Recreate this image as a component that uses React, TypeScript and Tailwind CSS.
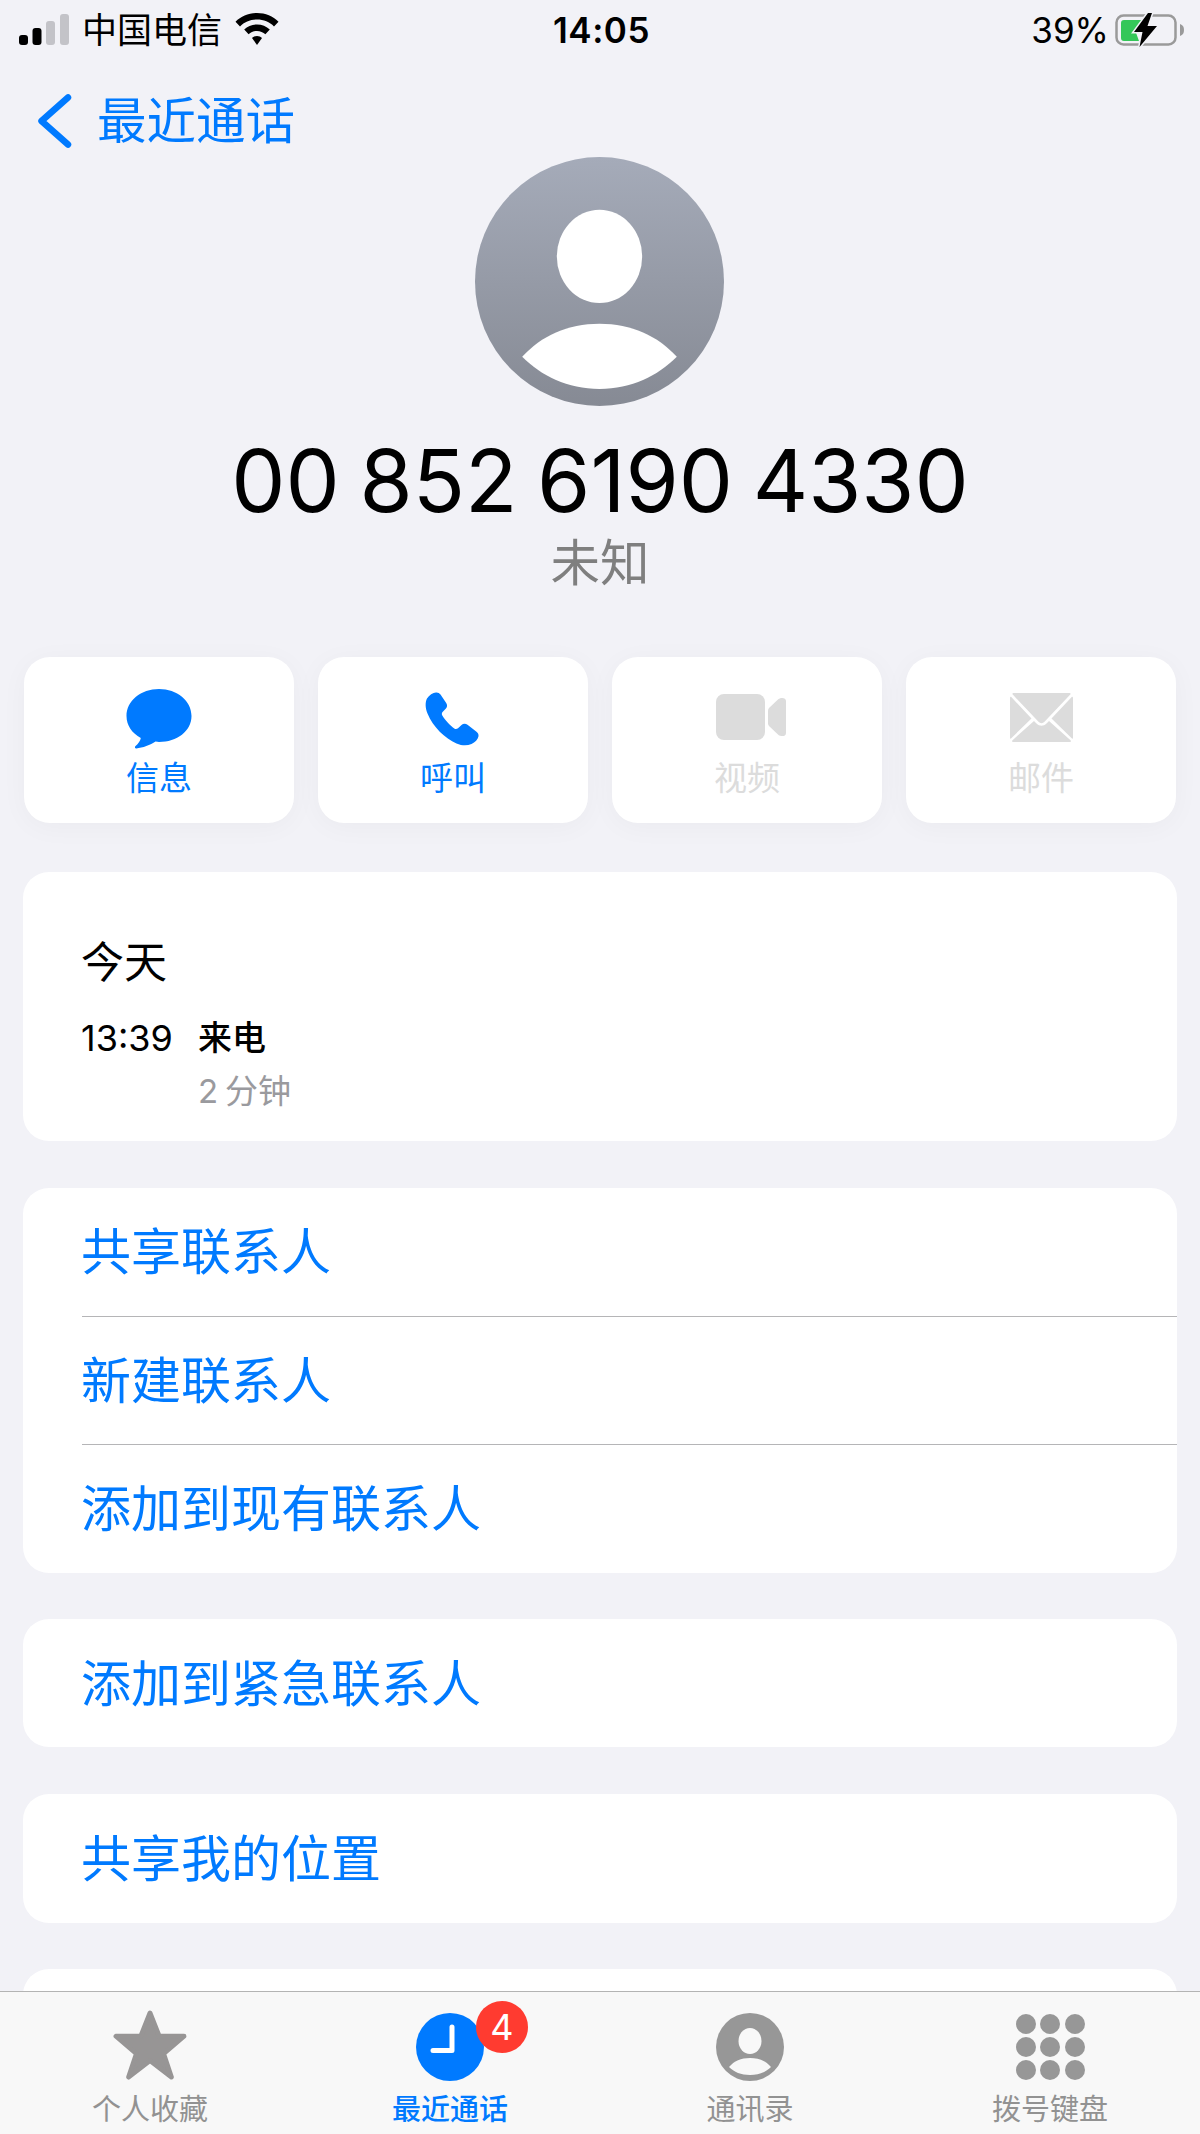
import React from "react";

const Blue = "#007aff";

function ActionButton({ label, disabled, children }: { label: string; disabled?: boolean; children: React.ReactNode }) {
  return (
    <div className="h-[166px] rounded-[26px] bg-white shadow-[0_4px_28px_rgba(0,0,0,0.035)] flex flex-col items-center">
      <div className="h-[92px] w-full flex items-end justify-center">{children}</div>
      <div className={`text-[33px] leading-[40px] mt-[9px] ${disabled ? "text-[#dcdcdc]" : "text-[#007aff]"}`}>{label}</div>
    </div>
  );
}

function LinkRow({ label }: { label: string }) {
  return <div className="flex-1 flex items-center pl-[58px] text-[50px] leading-none text-[#007aff]">{label}</div>;
}

function TabItem({ label, active, children }: { label: string; active?: boolean; children: React.ReactNode }) {
  return (
    <div className="flex flex-col items-center">
      <div className="h-[96px] w-full flex items-end justify-center relative">{children}</div>
      <div className={`text-[29px] leading-[38px] mt-[3px] ${active ? "text-[#007aff] font-medium" : "text-[#929292]"}`}>{label}</div>
    </div>
  );
}

export default function App() {
  return (
    <div className="w-[1200px] h-[2134px] bg-[#f2f2f7] flex flex-col overflow-hidden font-['Inter','Noto_Sans_CJK_SC',sans-serif] text-black">
      <div className="flex-1 min-h-0 overflow-hidden">
        {/* status bar */}
        <div className="h-[60px] grid grid-cols-[1fr_auto_1fr] items-center pl-[19px] pr-[15px]">
          <div className="flex items-center">
            <svg width="50" height="31" viewBox="0 0 50 31" className="mt-[-1px]">
              <rect x="0" y="21" width="9" height="10" rx="3" fill="#000" />
              <rect x="13.5" y="14" width="9" height="17" rx="3" fill="#000" />
              <rect x="27" y="7" width="9" height="24" rx="3" fill="#c3c3c8" />
              <rect x="41" y="0" width="9" height="31" rx="3" fill="#c3c3c8" />
            </svg>
            <span className="text-[35px] leading-none ml-[13px]">中国电信</span>
            <svg width="44" height="32" viewBox="0 0 44 32" className="ml-[13px] mt-[-2px]">
              <path d="M22 0C13.5 0 6 3.3 0.5 8.7L5 13.5C9.4 9.2 15.4 6.6 22 6.6C28.6 6.6 34.6 9.2 39 13.5L43.5 8.7C38 3.3 30.5 0 22 0Z" fill="#000" />
              <path d="M22 11.5C17 11.5 12.6 13.4 9.2 16.6L13.6 21.2C15.8 19.2 18.8 17.9 22 17.9C25.2 17.9 28.2 19.2 30.4 21.2L34.8 16.6C31.4 13.4 27 11.5 22 11.5Z" fill="#000" />
              <path d="M22 23C20 23 18.3 23.7 17 25L22 32L27 25C25.7 23.7 24 23 22 23Z" fill="#000" />
            </svg>
          </div>
          <div className="text-[35px] leading-none font-semibold tracking-[0.5px] mt-[1px] ml-[-1px]">14:05</div>
          <div className="flex items-center justify-end">
            <span className="text-[35px] leading-none mr-[6px] mt-[1px]">39%</span>
            <svg width="70" height="34" viewBox="0 0 70 34">
              <rect x="1.5" y="2.5" width="59" height="29" rx="7" fill="none" stroke="#9a9a9a" strokeWidth="2.5" />
              <path d="M9 7H27L20 17L24 28H9C7 28 6 27 6 25V10C6 8 7 7 9 7Z" fill="#34c759" />
              <path d="M33 0L19 19H27.5L24.5 34L42 13H32.5L37 0Z" fill="#f2f2f7" stroke="#f2f2f7" strokeWidth="3" />
              <path d="M33 0L19 19H27.5L24.5 34L42 13H32.5L37 0Z" fill="#000" />
              <path d="M65 11C68 12 69 14 69 17C69 20 68 22 65 23Z" fill="#9a9a9a" />
            </svg>
          </div>
        </div>

        {/* nav */}
        <div className="mt-[34px] h-[54px] flex items-center pl-[38px]">
          <svg width="34" height="54" viewBox="0 0 34 54">
            <path d="M30 3.5L3.5 27L30 50.5" fill="none" stroke={Blue} strokeWidth="6.5" strokeLinecap="round" strokeLinejoin="round" />
          </svg>
          <span className="text-[49.5px] leading-none text-[#007aff] ml-[25px] mt-[2px]">最近通话</span>
        </div>

        {/* avatar */}
        <div className="mt-[9px] flex justify-center">
          <svg width="249" height="249" viewBox="0 0 248 248" className="ml-[-1px]">
            <defs>
              <linearGradient id="avatarGrad" x1="0" y1="0" x2="0" y2="1">
                <stop offset="0" stopColor="#a5abb9" />
                <stop offset="1" stopColor="#868a94" />
              </linearGradient>
            </defs>
            <circle cx="124" cy="124" r="124" fill="url(#avatarGrad)" />
            <ellipse cx="124" cy="99" rx="42.5" ry="46.5" fill="#fff" />
            <path d="M47 199C66 178 92 166 124 166C156 166 182 178 201 199C182 218 156 231 124 231C92 231 66 218 47 199Z" fill="#fff" />
          </svg>
        </div>

        {/* number */}
        <div className="mt-[25px] h-[100px] flex items-center justify-center text-[86px] leading-none [word-spacing:-4.5px]">00 852 6190 4330</div>
        <div className="mt-[3px] h-[60px] flex items-center justify-center text-[49.5px] leading-none text-[#7f7f7f]">未知</div>

        {/* actions */}
        <div className="mt-[63px] px-[24px] grid grid-cols-4 gap-[24px]">
          <ActionButton label="信息">
            <svg width="66" height="60" viewBox="0 0 66 60">
              <path d="M33 0C15 0 0.5 11.8 0.5 27C0.5 36.5 6 44.2 14.8 49C14.5 51.5 12.5 54.5 9.3 57.3C8.5 58.3 9 59.6 10.4 59.5C16.5 59 24.5 56 29.5 52.6C31 52.8 32 53 33 53C51 53 65.5 42 65.5 27C65.5 11.8 51 0 33 0Z" fill={Blue} />
            </svg>
          </ActionButton>
          <ActionButton label="呼叫">
            <svg width="54" height="54" viewBox="0 0 54 54" className="mb-[3px] ml-[-3px]">
              <path d="M11 0.5C8 0.8 4 3 2 6.5C0 10.5 0.3 16 2.5 21.5C8 35 20 46.5 31.5 51.5C37 53.8 42 54 46.5 52C50 50.3 53 47.5 53.5 44.3C53.8 42.5 53 41 51.5 39.7L42.5 32.7C40.5 31.2 38.3 31.3 36.5 33L33 36.2C31.8 37.2 30.5 37.3 29.3 36.5C25 33.3 20 28 17.3 23.5C16.5 22.2 16.8 20.8 17.8 19.8L20.7 16.8C22.3 15 22.5 13 21.2 11L15.5 2.5C14.3 1 12.8 0.3 11 0.5Z" fill={Blue} />
            </svg>
          </ActionButton>
          <ActionButton label="视频" disabled>
            <svg width="70" height="46" viewBox="0 0 70 46" className="mb-[9px] ml-[8px]">
              <rect x="0" y="0" width="49" height="46" rx="8" fill="#dcdcdc" />
              <path d="M52 16.5C52 15.5 52.4 14.7 53 14L62.5 5C64.5 3.5 70 3 70 7V39C70 43 64.5 42.5 62.5 41L53 32C52.4 31.3 52 30.5 52 29.5Z" fill="#dcdcdc" />
            </svg>
          </ActionButton>
          <ActionButton label="邮件" disabled>
            <svg width="63" height="49" viewBox="0 0 63 49" className="mb-[7px]">
              <path d="M4 0H59C60.5 0 61 0.8 60.3 1.6L34.5 28.8C32.8 30.6 30.2 30.6 28.5 28.8L2.7 1.6C2 0.8 2.5 0 4 0Z" fill="#dcdcdc" />
              <path d="M0 5C0 3.8 0.8 3.5 1.5 4.3L21.5 25.5L1 45.5C0.5 46 0 45.6 0 44.8Z" fill="#dcdcdc" />
              <path d="M63 5C63 3.8 62.2 3.5 61.5 4.3L41.5 25.5L62 45.5C62.5 46 63 45.6 63 44.8Z" fill="#dcdcdc" />
              <path d="M3 49H60C61 49 61.3 48 60.5 47.2L39 28L36.5 30.5C33.5 33.5 29.5 33.5 26.5 30.5L24 28L2.5 47.2C1.7 48 2 49 3 49Z" fill="#dcdcdc" />
            </svg>
          </ActionButton>
        </div>

        <div className="px-[23px]">
          {/* history */}
          <div className="mt-[49px] h-[269px] rounded-[26px] bg-white pl-[58px] pt-[66px]">
            <div className="text-[43px] leading-[48px]">今天</div>
            <div className="mt-[32px] flex">
              <div className="w-[117px] text-[36px] leading-[40px]">13:39</div>
              <div>
                <div className="text-[34px] leading-[40px] font-medium">来电</div>
                <div className="mt-[13px] text-[33px] leading-[40px] text-[#9a9a9e] [word-spacing:-2.5px]">2 分钟</div>
              </div>
            </div>
          </div>

          {/* contact actions */}
          <div className="mt-[47px] h-[385px] rounded-[26px] bg-white flex flex-col">
            <LinkRow label="共享联系人" />
            <div className="ml-[59px] h-px bg-[#b5b5b7]" />
            <LinkRow label="新建联系人" />
            <div className="ml-[59px] h-px bg-[#b5b5b7]" />
            <LinkRow label="添加到现有联系人" />
          </div>

          <div className="mt-[46px] h-[128px] rounded-[26px] bg-white flex flex-col">
            <div className="flex-1 flex items-center pl-[58px] pt-[2px] text-[50px] leading-none text-[#007aff]">添加到紧急联系人</div>
          </div>

          <div className="mt-[47px] h-[129px] rounded-[26px] bg-white flex flex-col">
            <LinkRow label="共享我的位置" />
          </div>

          <div className="mt-[46px] h-[128px] rounded-[26px] bg-white" />
        </div>
      </div>

      {/* tab bar */}
      <div className="h-[143px] shrink-0 border-t border-[#b4b4b4] bg-[#f8f8f8] grid grid-cols-4">
        <TabItem label="个人收藏">
          <svg width="74" height="70" viewBox="0 0 76 72" className="mb-[8px]">
            <path d="M38 3L47.5 27H73L52 45L60 69L38 52L16 69L24 45L3 27H28.5Z" fill="#979595" stroke="#979595" strokeWidth="5" strokeLinejoin="round" />
          </svg>
        </TabItem>
        <TabItem label="最近通话" active>
          <svg width="68" height="68" viewBox="0 0 68 68" className="mb-[7px]">
            <circle cx="34" cy="34" r="34" fill={Blue} />
            <path d="M36 14V37.5H17" fill="none" stroke="#fff" strokeWidth="5" strokeLinecap="round" strokeLinejoin="round" />
          </svg>
          <div className="absolute left-[176px] top-[9px] w-[52px] h-[52px] rounded-full bg-[#ff3b30] flex items-center justify-center text-white text-[36px] leading-none">4</div>
        </TabItem>
        <TabItem label="通讯录">
          <svg width="68" height="68" viewBox="0 0 68 68" className="mb-[7px]">
            <circle cx="34" cy="34" r="34" fill="#979797" />
            <ellipse cx="34" cy="28" rx="11.5" ry="13" fill="#f8f8f8" />
            <path d="M13 54C18 48 25 45 34 45C43 45 50 48 55 54C50 59 43 62 34 62C25 62 18 59 13 54Z" fill="#f8f8f8" />
          </svg>
        </TabItem>
        <TabItem label="拨号键盘">
          <div className="mb-[8px] grid grid-cols-[20px_20px_20px] grid-rows-[20px_20px_20px] gap-x-[4.5px] gap-y-[3px]">
            {Array.from({ length: 9 }).map((_, i) => (
              <div key={i} className="rounded-full bg-[#979797]" />
            ))}
          </div>
        </TabItem>
      </div>
    </div>
  );
}
